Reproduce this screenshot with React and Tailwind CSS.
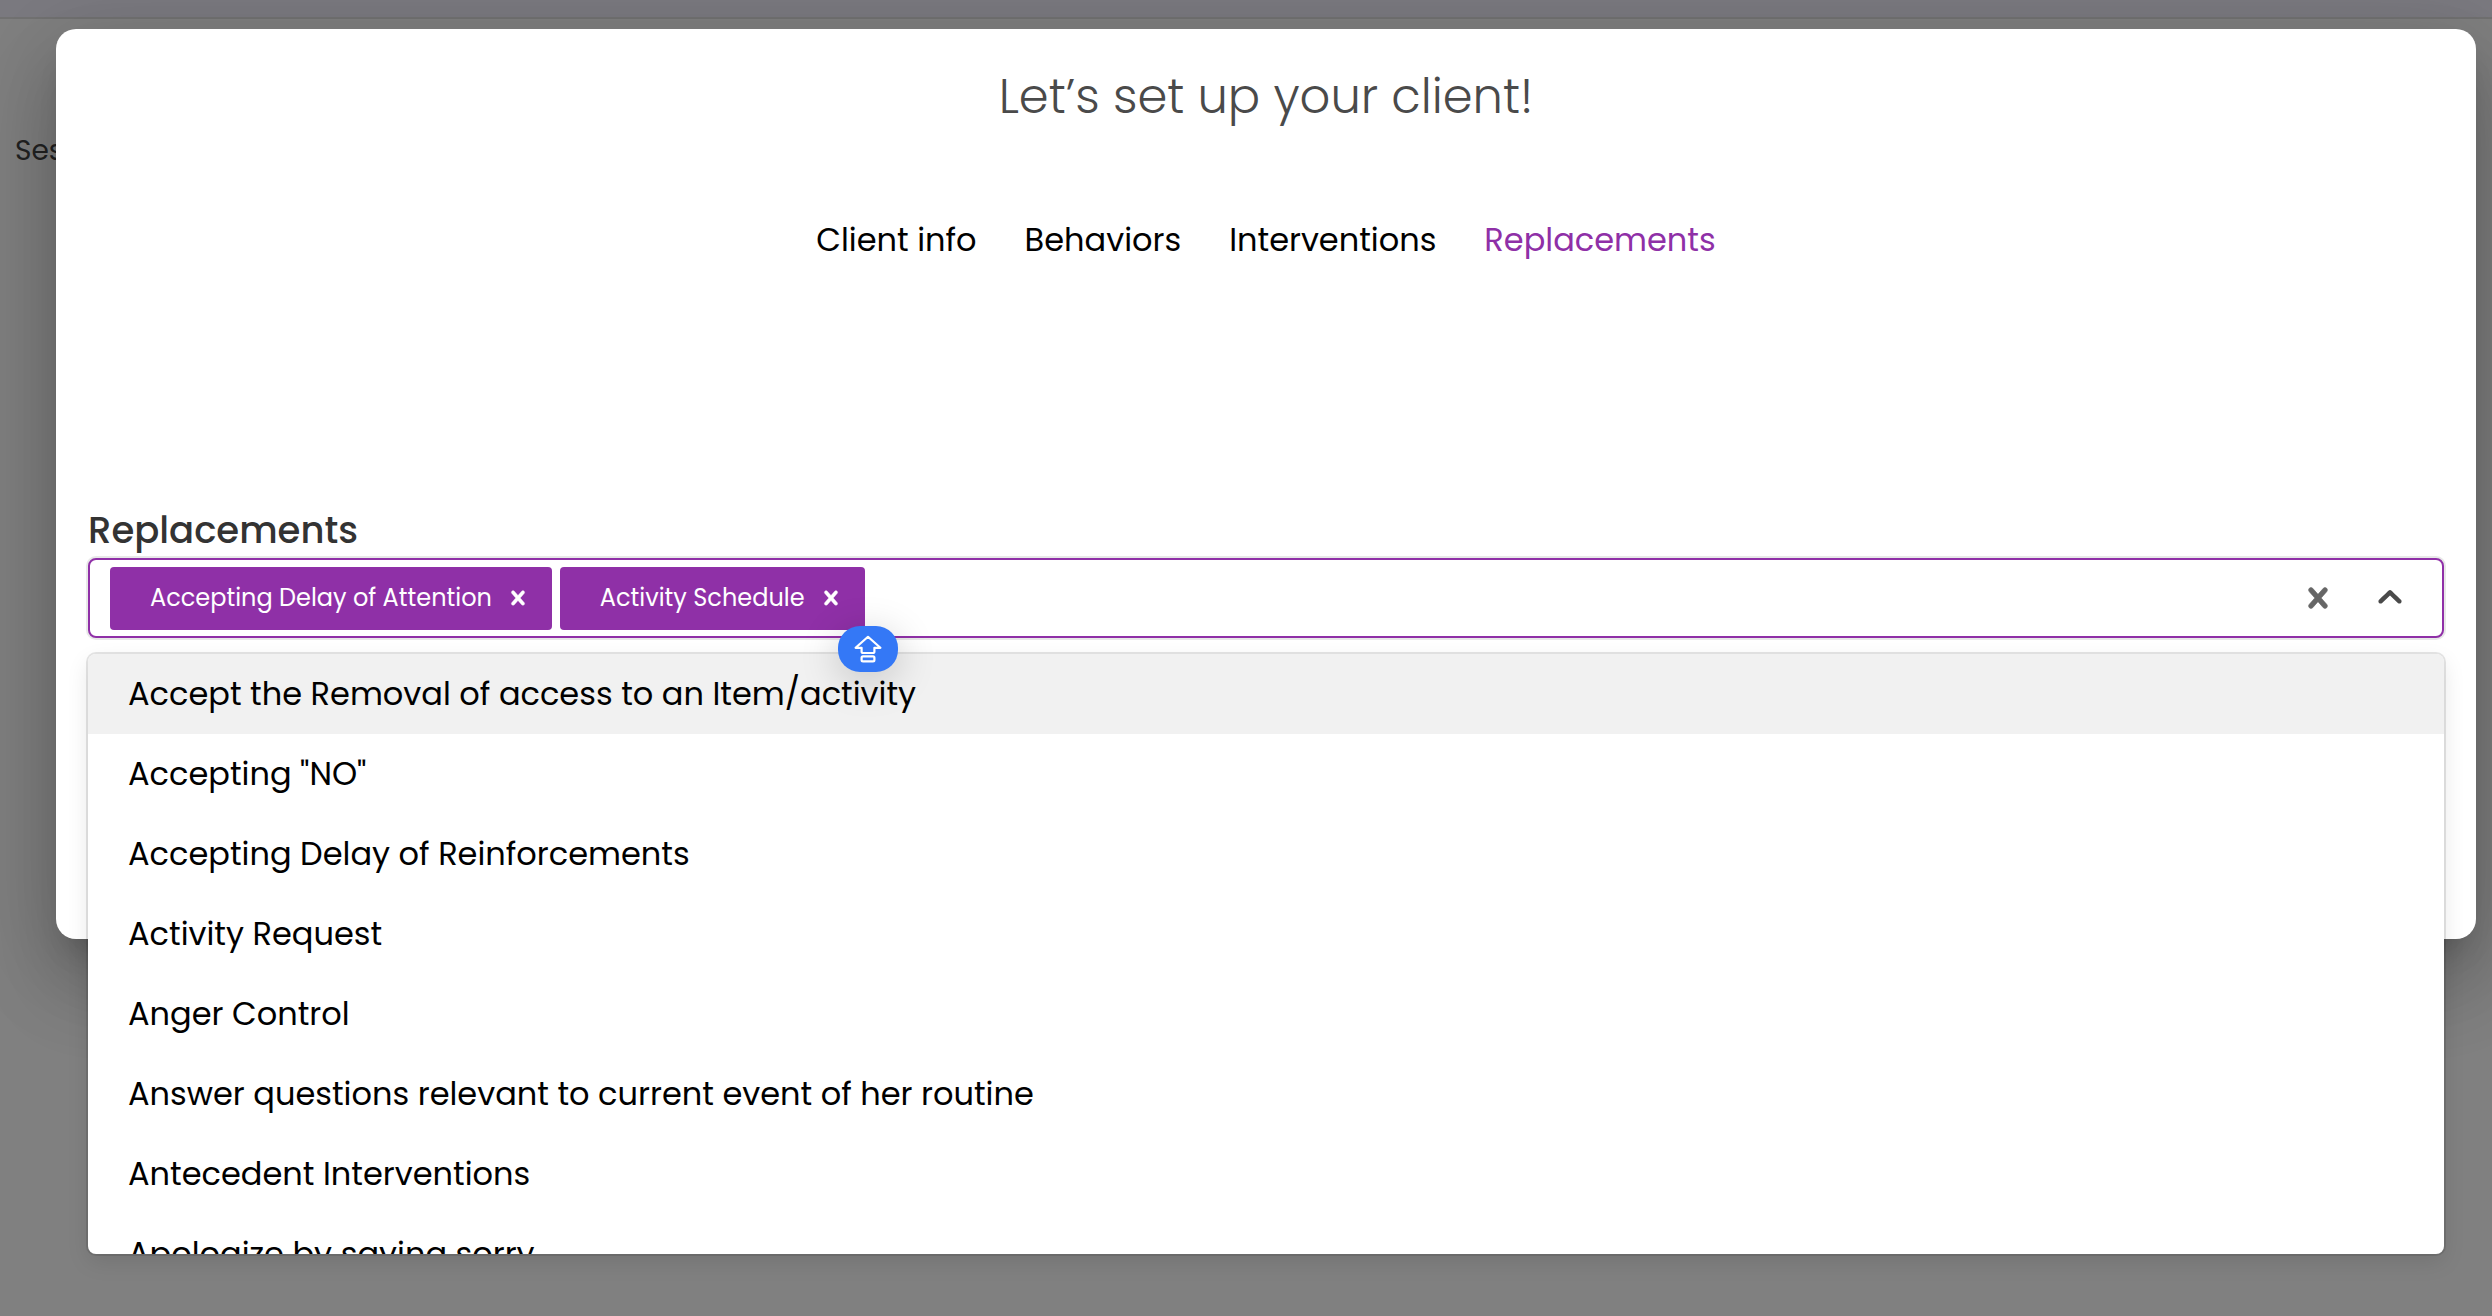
import { useState } from "react";

const STEPS = ["Client info", "Behaviors", "Interventions", "Replacements"];

const OPTIONS = [
  "Accept the Removal of access to an Item/activity",
  'Accepting "NO"',
  "Accepting Delay of Reinforcements",
  "Activity Request",
  "Anger Control",
  "Answer questions relevant to current event of her routine",
  "Antecedent Interventions",
  "Apologize by saying sorry",
];

function CrossIcon({ className }) {
  return (
    <svg viewBox="0 0 20 20" className={className} fill="currentColor" aria-hidden="true">
      <path
        stroke="currentColor"
        strokeWidth="0.3"
        d="M14.348 14.849c-0.469 0.469-1.229 0.469-1.697 0l-2.651-3.030-2.651 3.029c-0.469 0.469-1.229 0.469-1.697 0-0.469-0.469-0.469-1.229 0-1.697l2.758-3.15-2.759-3.152c-0.469-0.469-0.469-1.228 0-1.697s1.228-0.469 1.697 0l2.652 3.031 2.651-3.031c0.469-0.469 1.228-0.469 1.697 0s0.469 1.229 0 1.697l-2.758 3.152 2.758 3.15c0.469 0.469 0.469 1.229 0 1.698z"
      />
    </svg>
  );
}

function ChevronUpIcon({ className }) {
  return (
    <svg viewBox="0 0 20 20" className={className} fill="currentColor" aria-hidden="true">
      <path
        transform="rotate(180 10 10)"
        d="M4.516 7.548c0.436-0.446 1.043-0.481 1.576 0l3.908 3.747 3.908-3.747c0.533-0.481 1.141-0.446 1.574 0 0.436 0.445 0.408 1.197 0 1.615-0.406 0.418-4.695 4.502-4.695 4.502-0.217 0.223-0.502 0.335-0.787 0.335s-0.57-0.112-0.789-0.335c0 0-4.287-4.084-4.695-4.502s-0.436-1.17 0-1.615z"
      />
    </svg>
  );
}

function CapsLockBadge() {
  return (
    <span className="absolute top-[68px] left-[750px] z-20 flex h-[46px] w-[60px] items-center justify-center rounded-[22px] bg-[#3478f6] text-white shadow-[0_8px_40px_rgba(0,0,0,0.2)]">
      <svg viewBox="0 0 28 28" className="size-7" fill="none" stroke="currentColor" strokeWidth="2.2" strokeLinejoin="round" aria-hidden="true">
        <path d="M14 1.8 L1.6 12.8 H7.6 V16.4 Q7.6 18 9.2 18 H18.8 Q20.4 18 20.4 16.4 V12.8 H26.4 Z" />
        <rect x="7.6" y="21.4" width="12.8" height="5" rx="1.4" />
      </svg>
    </span>
  );
}

function Chip({ label, onRemove }) {
  return (
    <span className="flex h-[63px] items-center rounded-sm bg-[#8f30a7] pr-4 pl-10 text-white">
      <span className="text-2xl whitespace-nowrap">{label}</span>
      <button type="button" aria-label={`Remove ${label}`} onClick={onRemove} className="ml-2 flex size-9 items-center justify-center">
        <CrossIcon className="size-7" />
      </button>
    </span>
  );
}

export default function App() {
  const [selected, setSelected] = useState(["Accepting Delay of Attention", "Activity Schedule"]);
  const [step, setStep] = useState("Replacements");

  return (
    <div className="relative h-screen overflow-hidden bg-[#808080] font-['Poppins','Inter','Liberation_Sans',sans-serif]">
      <header className="h-[19px] border-b-2 border-[#727272] bg-[#7b7a80]" />
      <main className="px-[15px] pt-[110px]">
        <p className="text-[28px] leading-[44px] text-[#222]">Sessions</p>
      </main>

      <div className="absolute inset-0 pt-[29px] pr-4 pl-14">
        <section
          role="dialog"
          aria-labelledby="dialog-title"
          className="min-h-[910px] rounded-[20px] bg-white px-8 pt-8 shadow-[0_22px_30px_-14px_rgba(0,0,0,0.2),0_48px_76px_6px_rgba(0,0,0,0.14),0_18px_92px_16px_rgba(0,0,0,0.12)]"
        >
          <h1 id="dialog-title" className="text-center text-5xl leading-[72px] font-light text-[#4a4a4a]">
            Let’s set up your client!
          </h1>

          <nav className="mt-[83px] flex justify-center gap-12 text-[32px] leading-[48px]">
            {STEPS.map((name) => (
              <button key={name} type="button" onClick={() => setStep(name)} className={name === step ? "text-[#8f30a7]" : "text-black"}>
                {name}
              </button>
            ))}
          </nav>

          <div className="mt-60">
            <label htmlFor="replacements" className="block pb-0.5 text-[37px] leading-[52px] font-medium text-[#333]">
              Replacements
            </label>

            <div className="relative">
              <div className="flex h-20 items-center rounded-lg border-2 border-[#8f30a7] bg-white pr-4 pl-5 shadow-[0_0_0_2px_#e8e8e8]">
                <div className="flex flex-1 items-center gap-2">
                  {selected.map((label) => (
                    <Chip key={label} label={label} onRemove={() => setSelected(selected.filter((s) => s !== label))} />
                  ))}
                  <input id="replacements" type="text" className="min-w-0 flex-1 text-[32px] outline-none" />
                </div>
                <button type="button" aria-label="Clear all" onClick={() => setSelected([])} className="flex w-[72px] justify-center text-[#666]">
                  <CrossIcon className="size-10" />
                </button>
                <button type="button" aria-label="Close menu" className="flex w-[72px] justify-center text-[#4a4a4a]">
                  <ChevronUpIcon className="size-10" />
                </button>
              </div>

              <CapsLockBadge />

              <ul
                role="listbox"
                className="absolute inset-x-0 top-24 z-10 max-h-[600px] overflow-y-auto rounded-lg bg-white text-[32px] leading-[48px] text-black shadow-[0_0_0_2px_rgba(0,0,0,0.1),0_8px_22px_rgba(0,0,0,0.1)] [scrollbar-width:none]"
              >
                {OPTIONS.map((option, i) => (
                  <li key={option} role="option" aria-selected={i === 0} className={i === 0 ? "bg-[#f1f1f1] px-10 py-4" : "px-10 py-4"}>
                    {option}
                  </li>
                ))}
              </ul>
            </div>
          </div>
        </section>
      </div>
    </div>
  );
}
